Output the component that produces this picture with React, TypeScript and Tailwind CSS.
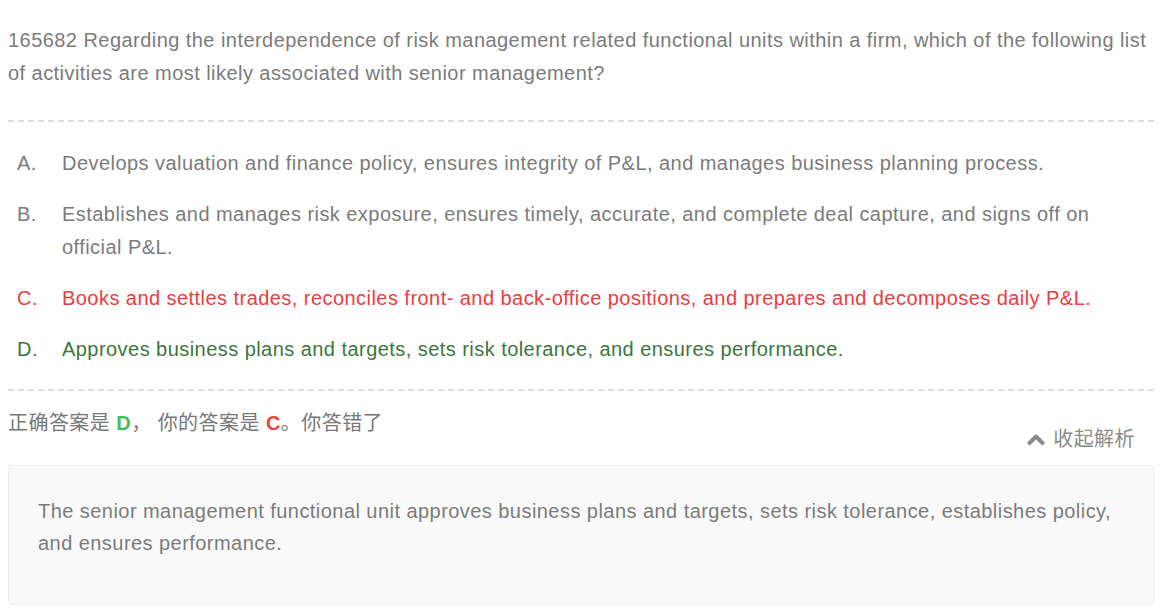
import { ReactNode } from 'react';

type Option = { key: string; text: string; tone: 'normal' | 'wrong' | 'right' };

const options: Option[] = [
  {
    key: 'A',
    text: 'Develops valuation and finance policy, ensures integrity of P&L, and manages business planning process.',
    tone: 'normal',
  },
  {
    key: 'B',
    text: 'Establishes and manages risk exposure, ensures timely, accurate, and complete deal capture, and signs off on official P&L.',
    tone: 'normal',
  },
  {
    key: 'C',
    text: 'Books and settles trades, reconciles front- and back-office positions, and prepares and decomposes daily P&L.',
    tone: 'wrong',
  },
  {
    key: 'D',
    text: 'Approves business plans and targets, sets risk tolerance, and ensures performance.',
    tone: 'right',
  },
];

const toneClass = {
  normal: 'text-[#7b7b7b]',
  wrong: 'text-[#ee3b40]',
  right: 'text-[#3c763d]',
};

function Dashed() {
  return (
    <div className="h-[2px] w-full bg-[repeating-linear-gradient(to_right,#dddddd_0_6px,transparent_6px_10px)]" />
  );
}

function OptionRow({ option }: { option: Option }) {
  return (
    <li className={`flex pl-[9px] ${toneClass[option.tone]}`}>
      <span className="w-[45px] shrink-0">{option.key}.</span>
      <span>{option.text}</span>
    </li>
  );
}

function ChevronUp() {
  return (
    <svg width="18" height="12" viewBox="0 0 18 12" aria-hidden="true">
      <polyline points="2.5,10 9,3.5 15.5,10" fill="none" stroke="#8a8a8a" strokeWidth="4" strokeLinecap="round" strokeLinejoin="round" />
    </svg>
  );
}

function Strong({ className, children }: { className: string; children: ReactNode }) {
  return <b className={`font-bold ${className}`}>{children}</b>;
}

export default function App() {
  return (
    <div className="min-h-screen bg-white px-2 pt-[24px] font-['Liberation_Sans','Arial','Noto_Sans_CJK_SC',sans-serif] text-[20px] leading-[32.5px] tracking-[0.45px] text-[#7b7b7b]">
      <div className="w-[1146px]">
        <p>
          165682 Regarding the interdependence of risk management related functional units within a firm, which of
          the following list of activities are most likely associated with senior management?
        </p>

        <div className="mt-[31px]">
          <Dashed />
        </div>

        <ul className="mt-[25px] flex flex-col gap-[18.5px]">
          {options.map(o => (
            <OptionRow key={o.key} option={o} />
          ))}
        </ul>

        <div className="mt-[24px]">
          <Dashed />
        </div>

        <div className="mt-[16px] flex items-start justify-between">
          <p className="text-[#777777]">
            正确答案是 <Strong className="text-[#45bd5a]">D</Strong>， 你的答案是{' '}
            <Strong className="text-[#e8453c]">C</Strong>。你答错了
          </p>
          <button className="mt-[16px] mr-[19px] flex items-center gap-[8px] text-[#8a8a8a]">
            <ChevronUp />
            <span>收起解析</span>
          </button>
        </div>

        <div className="mt-[9px] rounded-[4px] border border-[#eeeeee] bg-[#f9f9f9] px-[29px] pt-[29px] pb-[44px] text-[#7b7b7b]">
          The senior management functional unit approves business plans and targets, sets risk tolerance, establishes
          policy, and ensures performance.
        </div>
      </div>
    </div>
  );
}
